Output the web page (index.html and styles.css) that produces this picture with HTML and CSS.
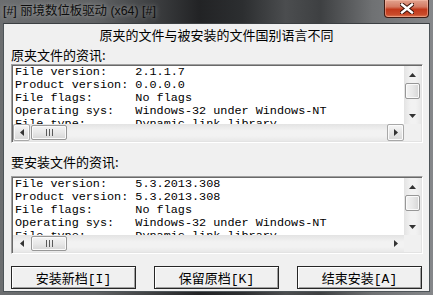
FILE: index.html
```html
<!DOCTYPE html>
<html lang="zh-CN">
<head>
  <meta charset="UTF-8" />
  <title>丽境数位板驱动 (x64)</title>
  <link rel="stylesheet" href="styles.css">
</head>
<body>
  <div class="window">
    <div class="titlebar">
      <span class="title">[#] 丽境数位板驱动 (x64) [#]</span>
      <div class="close">
        <svg width="14" height="11" viewBox="0 0 14 11">
          <path d="M2 1.5 L12 9.5 M12 1.5 L2 9.5" stroke="#3b1208" stroke-width="4.4" stroke-linecap="square"/>
          <path d="M2 1.5 L12 9.5 M12 1.5 L2 9.5" stroke="#fff" stroke-width="2.4" stroke-linecap="square"/>
        </svg>
      </div>
    </div>

    <div class="client">
      <p class="heading">原夹的文件与被安装的文件国别语言不同</p>

      <p class="label label-first">原夹文件的资讯:</p>
      <div class="infobox">
        <pre class="info">File version:    2.1.1.7
Product version: 0.0.0.0
File flags:      No flags
Operating sys:   Windows-32 under Windows-NT
File type:       Dynamic-link library
Language:        Chinese (Simplified)</pre>
        <div class="vscroll">
          <div class="arrow"><svg width="7" height="4" viewBox="0 0 7 4"><path d="M3.5 0 L7 4 L0 4 Z" fill="#333"/></svg></div>
          <div class="vthumb"></div>
          <div class="vtrack"></div>
          <div class="arrow"><svg width="7" height="4" viewBox="0 0 7 4"><path d="M0 0 L7 0 L3.5 4 Z" fill="#333"/></svg></div>
        </div>
        <div class="hscroll">
          <div class="arrow framed"><svg width="4" height="7" viewBox="0 0 4 7"><path d="M4 0 L4 7 L0 3.5 Z" fill="#333"/></svg></div>
          <div class="hthumb"><span></span><span></span><span></span></div>
          <div class="htrack"></div>
          <div class="arrow framed"><svg width="4" height="7" viewBox="0 0 4 7"><path d="M0 0 L4 3.5 L0 7 Z" fill="#333"/></svg></div>
        </div>
        <div class="corner"></div>
      </div>

      <p class="label label-second">要安装文件的资讯:</p>
      <div class="infobox infobox-second">
        <pre class="info">File version:    5.3.2013.308
Product version: 5.3.2013.308
File flags:      No flags
Operating sys:   Windows-32 under Windows-NT
File type:       Dynamic-link library
Language:        Chinese (Simplified)</pre>
        <div class="vscroll">
          <div class="arrow"><svg width="7" height="4" viewBox="0 0 7 4"><path d="M3.5 0 L7 4 L0 4 Z" fill="#333"/></svg></div>
          <div class="vthumb"></div>
          <div class="vtrack"></div>
          <div class="arrow"><svg width="7" height="4" viewBox="0 0 7 4"><path d="M0 0 L7 0 L3.5 4 Z" fill="#333"/></svg></div>
        </div>
        <div class="hscroll">
          <div class="arrow"><svg width="4" height="7" viewBox="0 0 4 7"><path d="M4 0 L4 7 L0 3.5 Z" fill="#333"/></svg></div>
          <div class="hthumb"><span></span><span></span><span></span></div>
          <div class="htrack"></div>
          <div class="arrow"><svg width="4" height="7" viewBox="0 0 4 7"><path d="M0 0 L4 3.5 L0 7 Z" fill="#333"/></svg></div>
        </div>
        <div class="corner"></div>
      </div>

      <div class="buttons">
        <button class="btn">安装新档[I]</button>
        <button class="btn">保留原档[K]</button>
        <button class="btn">结束安装[A]</button>
      </div>
    </div>
  </div>
</body>
</html>
```

FILE: styles.css
```css
:root {
  --face: #f0f0f0;
  --cjk: "Noto Sans CJK SC", sans-serif;
  --mono: "Liberation Mono", "Noto Sans CJK SC", monospace;
}

* {
  box-sizing: border-box;
  margin: 0;
  padding: 0;
}

body {
  width: 433px;
  height: 295px;
  overflow: hidden;
  background: #1d2328;
  font-family: var(--cjk);
}

.window {
  width: 433px;
  height: 295px;
  display: flex;
  flex-direction: column;
  background:
    linear-gradient(90deg, #6c6e70 0%, #606264 22%, #414345 34%, #222325 46%, #2c2e30 56%, #4b4d4f 66%, #3e4042 74%, #6f7173 86%, #85878a 100%);
}

/* title bar */
.titlebar {
  height: 23px;
  flex: none;
  display: flex;
  justify-content: space-between;
  align-items: flex-start;
}
.titlebar .title {
  padding: 3px 0 0 3px;
  font-family: "Liberation Sans", "Noto Sans CJK SC", sans-serif;
  font-size: 12.4px;
  line-height: 16px;
  color: #0d0d0d;
  text-shadow: 0 0 5px rgba(210, 210, 210, 0.7);
}
.titlebar .close {
  width: 45px;
  height: 18px;
  margin-right: 4px;
  border: 1px solid #3e1a12;
  border-top: none;
  border-radius: 0 0 4px 4px;
  background: linear-gradient(180deg, #e2a38f 0%, #d47a62 40%, #c2391b 55%, #c94a2a 85%, #db7a55 100%);
  box-shadow: inset 0 0 0 1px rgba(255, 200, 180, 0.45);
  display: flex;
  justify-content: center;
  align-items: center;
}

/* client area */
.client {
  flex: 1;
  margin: 0 3px 3px;
  padding: 0 7px;
  background: var(--face);
  border: 1px solid #4d5458;
  border-top-color: #3b3f42;
  display: flex;
  flex-direction: column;
}
.heading {
  margin-top: 3px;
  font-size: 13px;
  line-height: 16px;
  text-align: center;
  color: #000;
}
.label {
  font-size: 13px;
  color: #000;
}
.label-first {
  margin-top: 3px;
  line-height: 17px;
}
.label-second {
  margin-top: 10px;
  line-height: 18px;
}

/* text box with scrollbars */
.infobox {
  width: 412px;
  height: 79px;
  margin-top: 1px;
  background: #fff;
  border: 1px solid;
  border-color: #a0a0a0 #fff #fff #a0a0a0;
  box-shadow: inset 1px 1px 0 #696969, inset -1px -1px 0 #e3e3e3;
  padding: 1px;
  display: grid;
  grid-template-columns: 1fr 17px;
  grid-template-rows: 1fr 17px;
  overflow: hidden;
}
.infobox-second {
  height: 78px;
  margin-top: 5px;
}
.info {
  overflow: hidden;
  padding: 0 2px;
  font-family: var(--mono);
  font-size: 11.8px;
  line-height: 13px;
  color: #000;
  white-space: pre;
}

.vscroll {
  display: flex;
  flex-direction: column;
  background: linear-gradient(90deg, #e3e3e3, #f2f2f2 40%, #f2f2f2 70%, #e8e8e8);
}
.hscroll {
  display: flex;
  background: linear-gradient(180deg, #e3e3e3, #f2f2f2 40%, #f2f2f2 70%, #e8e8e8);
}
.corner {
  background: var(--face);
}

.arrow {
  width: 17px;
  height: 17px;
  flex: none;
  display: flex;
  justify-content: center;
  align-items: center;
}
.arrow.framed {
  border: 1px solid #a8a8a8;
  border-radius: 2px;
  background: linear-gradient(180deg, #f6f6f6, #e6e6e6 50%, #d9d9d9);
  box-shadow: inset 0 0 0 1px #fbfbfb;
}

.vthumb {
  height: 16px;
  margin: 0 1px;
  flex: none;
  border: 1px solid #979797;
  border-radius: 2px;
  background: linear-gradient(90deg, #f3f3f3, #e8e8e8 50%, #d6d6d6);
  box-shadow: inset 0 0 0 1px #fafafa;
}
.vtrack,
.htrack {
  flex: 1;
}

.hthumb {
  width: 36px;
  margin: 1px 0 1px 1px;
  flex: none;
  border: 1px solid #979797;
  border-radius: 2px;
  background: linear-gradient(180deg, #f3f3f3, #e8e8e8 50%, #d6d6d6);
  box-shadow: inset 0 0 0 1px #fafafa;
  display: flex;
  justify-content: center;
  align-items: center;
  gap: 2px;
}
.hthumb span {
  width: 1px;
  height: 7px;
  background: #5a5a5a;
}

/* bottom buttons */
.buttons {
  margin-top: 12px;
  display: flex;
  justify-content: space-between;
}
.btn {
  width: 125px;
  height: 23px;
  font-family: var(--mono);
  font-size: 13px;
  color: #000;
  background: var(--face);
  border: 1px solid #262626;
  box-shadow: inset 1px 1px 0 #fff, inset -1px -1px 0 #a0a0a0;
  cursor: pointer;
}
```
